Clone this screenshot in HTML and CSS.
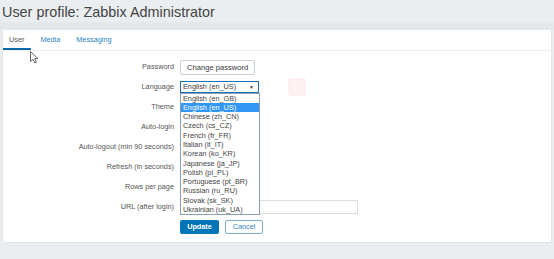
FILE: index.html
```html
<!DOCTYPE html>
<html>
  <head>
    <meta charset="UTF-8" />
    <title>User profile</title>
    <link rel="stylesheet" href="styles.css">
  </head>
  <body>
    <div class="header">
      <h1 class="page-title">User profile: Zabbix Administrator</h1>
    </div>
    <div class="panel">
      <ul class="tabs">
        <li class="tab active">User</li>
        <li class="tab">Media</li>
        <li class="tab">Messaging</li>
      </ul>
      <div class="form">
        <label class="form-label">Password</label>
        <div class="form-field"><span class="btn-alt">Change password</span></div>

        <label class="form-label">Language</label>
        <div class="form-field lang-field">
          <span class="select">English (en_US)<span class="arrow">&#9660;</span></span>
          <ul class="select-list">
            <li>English (en_GB)</li>
            <li class="selected">English (en_US)</li>
            <li>Chinese (zh_CN)</li>
            <li>Czech (cs_CZ)</li>
            <li>French (fr_FR)</li>
            <li>Italian (it_IT)</li>
            <li>Korean (ko_KR)</li>
            <li>Japanese (ja_JP)</li>
            <li>Polish (pl_PL)</li>
            <li>Portuguese (pt_BR)</li>
            <li>Russian (ru_RU)</li>
            <li>Slovak (sk_SK)</li>
            <li>Ukrainian (uk_UA)</li>
          </ul>
          <span class="ghost-icon"></span>
        </div>

        <label class="form-label">Theme</label>
        <div class="form-field"></div>

        <label class="form-label">Auto-login</label>
        <div class="form-field"></div>

        <label class="form-label">Auto-logout (min 90 seconds)</label>
        <div class="form-field"></div>

        <label class="form-label">Refresh (in seconds)</label>
        <div class="form-field"></div>

        <label class="form-label">Rows per page</label>
        <div class="form-field"></div>

        <label class="form-label">URL (after login)</label>
        <div class="form-field"><span class="text-input"></span></div>

        <span></span>
        <div class="form-field buttons">
          <span class="btn">Update</span>
          <span class="btn-alt cancel">Cancel</span>
        </div>
      </div>
      <svg class="cursor" width="10" height="13" viewBox="0 0 10 13">
        <path d="M0.5 0.5 L0.5 10.5 L3 8.2 L4.8 12 L6.4 11.3 L4.7 7.6 L8 7.6 Z" fill="#fff" stroke="#555" stroke-width="0.9" stroke-linejoin="round"/>
      </svg>
    </div>
  </body>
</html>
```

FILE: styles.css
```css
body {
  margin: 0;
  background-color: #ebeef1;
  font-family: "Liberation Sans", Arial, sans-serif;
  font-size: 7.3px;
  color: #555;
}

.header {
  height: 22px;
  padding: 0 2px;
  border-bottom: 8px solid #e4e8eb;
}

.page-title {
  margin: 0;
  font-size: 14.4px;
  font-weight: normal;
  line-height: 24px;
  color: #444;
}

.panel {
  position: relative;
  margin: 0 2px;
  background-color: #fff;
  border: 1px solid #e2e6e9;
  border-top: none;
  padding-bottom: 5px;
}

.tabs {
  display: flex;
  gap: 2px;
  margin: 0;
  padding: 0;
  list-style: none;
  height: 20px;
  border-bottom: 1px solid #eceff1;
}

.tab {
  padding: 0 7px;
  line-height: 20px;
  color: #2a84c6;
}

.tab:first-child {
  padding-left: 6px;
}

.tab.active {
  color: #5a5a5a;
  box-shadow: inset 0 -2px 0 #0c6aa8;
}

.form {
  display: grid;
  grid-template-columns: 171px 1fr;
  grid-auto-rows: 20px;
  column-gap: 6px;
  padding-top: 6px;
}

.form-label {
  text-align: right;
  line-height: 20px;
  color: #555;
}

.form-field {
  display: flex;
  align-items: center;
  gap: 6px;
}

.lang-field {
  position: relative;
}

.btn-alt {
  box-sizing: border-box;
  height: 15px;
  line-height: 13px;
  padding: 0 6px;
  background: #fff;
  border: 1px solid #c9cfd3;
  border-radius: 2px;
  color: #3a3a3a;
  font-size: 7.6px;
}

.btn {
  box-sizing: border-box;
  width: 39px;
  height: 14px;
  line-height: 14px;
  text-align: center;
  background: #0275b8;
  border-radius: 2px;
  color: #fff;
  font-weight: bold;
}

.cancel {
  width: 38px;
  height: 14px;
  line-height: 12px;
  text-align: center;
  border-color: #7aaed3;
  color: #3a87bf;
  font-size: 7.3px;
}

.select {
  position: relative;
  box-sizing: border-box;
  width: 79px;
  height: 12px;
  line-height: 10px;
  padding-left: 2px;
  border: 1px solid #1e6fb5;
  color: #3a3a3a;
}

.arrow {
  position: absolute;
  right: 4px;
  top: 0;
  font-size: 5px;
}

.select-list {
  position: absolute;
  left: 0;
  top: 15.5px;
  z-index: 2;
  box-sizing: border-box;
  width: 80px;
  margin: 0;
  padding: 0;
  list-style: none;
  background: #fff;
  border: 1px solid #8a9eb5;
}

.select-list li {
  height: 9.3px;
  line-height: 9.3px;
  padding-left: 2px;
  color: #444;
}

.select-list li.selected {
  background: #3196f4;
  color: #fff;
}

.ghost-icon {
  position: absolute;
  left: 108px;
  top: 1px;
  width: 18px;
  height: 18px;
  border-radius: 3px;
  background: rgba(244, 120, 120, 0.11);
}

.ghost-icon::after {
  content: "";
  position: absolute;
  left: 5px;
  top: 5px;
  width: 7px;
  height: 7px;
  border: 1px solid rgba(255, 255, 255, 0.8);
  border-radius: 50%;
}

.text-input {
  box-sizing: border-box;
  width: 178px;
  height: 14px;
  border: 1px solid #d7dde1;
  background: #fff;
}

.buttons {
  gap: 6px;
}

.cursor {
  position: absolute;
  left: 27px;
  top: 21px;
}
```
